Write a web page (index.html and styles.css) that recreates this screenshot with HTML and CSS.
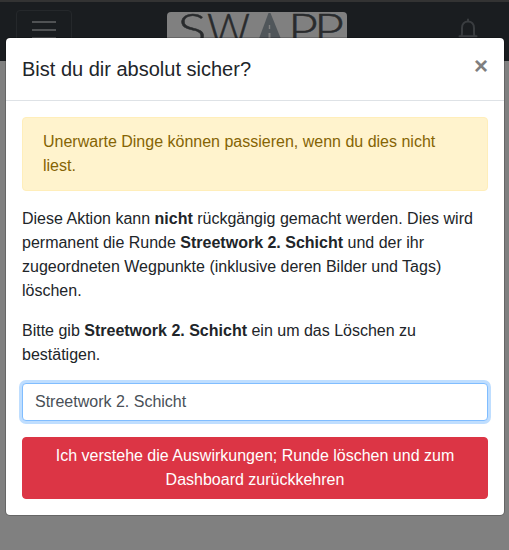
FILE: index.html
```html
<!DOCTYPE html>
<html lang="de">
<head>
<meta charset="utf-8">
<title>SWAPP</title>
<link rel="stylesheet" href="styles.css">
</head>
<body>
<nav class="navbar">
  <button class="toggler" aria-label="Navigation">
    <span></span><span></span><span></span>
  </button>
  <svg class="logo" viewBox="0 0 180 40" role="img" aria-label="SWAPP">
    <g class="logo-text">
      <text x="10.500" y="33" textLength="29" lengthAdjust="spacingAndGlyphs">S</text>
      <text x="40" y="33" textLength="43" lengthAdjust="spacingAndGlyphs">W</text>
      <text x="121" y="33" textLength="30" lengthAdjust="spacingAndGlyphs">P</text>
      <text x="147" y="33" textLength="30" lengthAdjust="spacingAndGlyphs">P</text>
    </g>
    <path class="road" d="M101.500 1h2L116 32H90Z"/>
    <path class="lane" d="M101.800 13h1.400v4h-1.400zM101.500 21h2v5h-2z"/>
  </svg>
  <svg class="bell" viewBox="0 0 20 24">
    <path d="M1.500 18.300h17M3.500 18c.5-1 .5-2 .5-3.500V10c0-4 2.500-6.500 6-6.500s6 2.500 6 6.500v4.500c0 1.500 0 2.500.5 3.500M10 3V1.500"/>
  </svg>
</nav>
<div class="modal" role="dialog">
  <header class="modal-header">
    <h5>Bist du dir absolut sicher?</h5>
    <button class="close" aria-label="Schließen">×</button>
  </header>
  <div class="modal-body">
    <div class="alert">Unerwarte Dinge können passieren, wenn du dies nicht liest.</div>
    <p>Diese Aktion kann <strong>nicht</strong> rückgängig gemacht werden. Dies wird permanent die Runde <strong>Streetwork 2. Schicht</strong> und der ihr zugeordneten Wegpunkte (inklusive deren Bilder und Tags) löschen.</p>
    <p>Bitte gib <strong>Streetwork 2. Schicht</strong> ein um das Löschen zu bestätigen.</p>
    <input class="field" type="text" value="Streetwork 2. Schicht">
    <button class="danger">Ich verstehe die Auswirkungen; Runde löschen und zum Dashboard zurückkehren</button>
  </div>
</div>
</body>
</html>
```

FILE: styles.css
```css
* { box-sizing: border-box; }
body {
  margin: 0;
  height: 550px;
  overflow: hidden;
  position: relative;
  background: #808080;
  color: #212529;
  font: 16px/24px "Liberation Sans", Arial, sans-serif;
}
.navbar {
  display: flex;
  justify-content: space-between;
  align-items: flex-start;
  height: 61px;
  padding: 8px 31px 0 16px;
  background: #1a1d20;
  border-top: 2px solid #333;
}
.toggler {
  display: flex;
  flex-direction: column;
  gap: 6px;
  width: 56px;
  height: 40px;
  padding: 10px 15px;
  border: 1px solid #25282b;
  border-radius: 4px;
  background: none;
}
.toggler span { height: 2px; flex: none; background: #505254; }
.logo {
  width: 180px;
  height: 40px;
  margin: 2px 17px 0 0;
  border-radius: 4px;
  background: #808080;
}
.logo-text {
  font: 300 44px Lato, sans-serif;
  fill: #292b2d;
  stroke: #292b2d;
  stroke-width: 0.5;
}
.road { fill: #50565a; }
.lane { fill: #808080; }
.bell {
  width: 20px;
  height: 24px;
  margin-top: 8px;
  fill: none;
  stroke: #3a3d40;
  stroke-width: 2;
  stroke-linecap: round;
}
.modal {
  position: absolute;
  top: 37px;
  left: 5px;
  width: 500px;
  background: #fff;
  background-clip: padding-box;
  border: 1px solid rgba(0, 0, 0, .2);
  border-radius: 5px;
}
.modal-header {
  display: flex;
  justify-content: space-between;
  padding: 16px;
  border-bottom: 1px solid #dee2e6;
}
h5 { margin: 0; font-size: 20px; line-height: 30px; font-weight: 400; }
.close {
  height: 24px;
  padding: 0;
  border: 0;
  background: none;
  color: #7f7f7f;
  font: 700 24px/24px "Liberation Sans", Arial, sans-serif;
}
.modal-body { padding: 16px; }
.alert {
  margin-bottom: 16px;
  padding: 12px 20px;
  border: 1px solid #ffeeba;
  border-radius: 4px;
  background: #fff3cd;
  color: #856404;
}
p { margin: 0 0 16px; }
.field {
  display: block;
  width: 100%;
  height: 38px;
  margin-bottom: 16px;
  padding: 6px 12px;
  border: 1px solid #80bdff;
  border-radius: 4px;
  outline: 0;
  box-shadow: 0 0 0 3px #bfdeff;
  color: #495057;
  font: inherit;
}
.danger {
  display: block;
  width: 100%;
  padding: 6px 12px;
  border: 1px solid #dc3545;
  border-radius: 4px;
  background: #dc3545;
  color: #fff;
  font: inherit;
}
```
